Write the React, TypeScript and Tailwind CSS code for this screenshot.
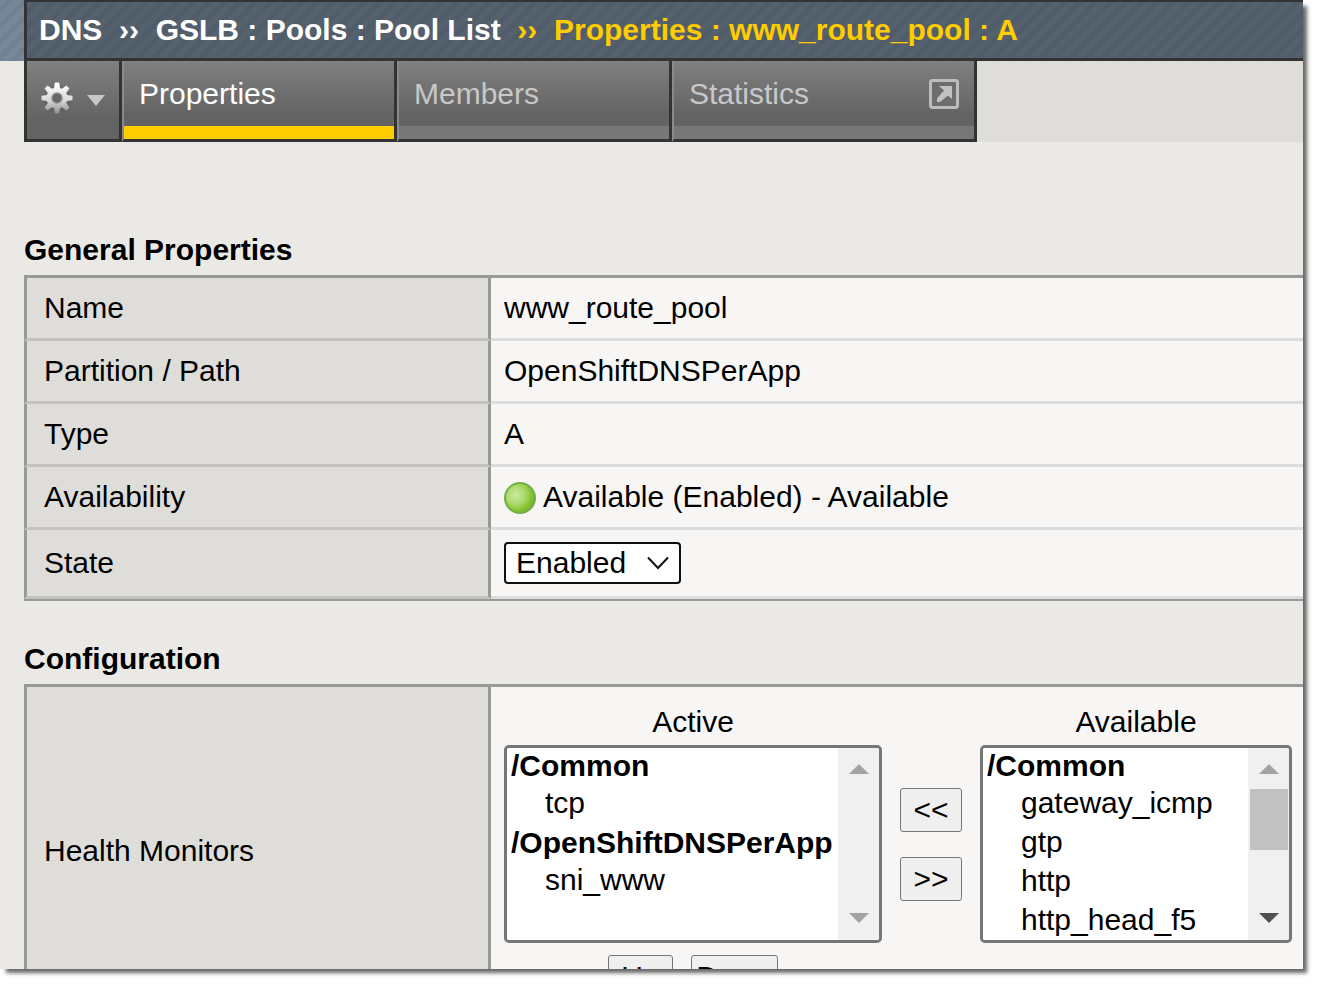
import React from "react";

type Group = { label: string; items: string[] };

const activeMonitors: Group[] = [
  { label: "/Common", items: ["tcp"] },
  { label: "/OpenShiftDNSPerApp", items: ["sni_www"] },
];

const availableMonitors: Group[] = [
  { label: "/Common", items: ["gateway_icmp", "gtp", "http", "http_head_f5"] },
];

const gearTeeth = [0, 45, 90, 135, 180, 225, 270, 315];

function GearIcon() {
  return (
    <svg width="34" height="34" viewBox="0 0 34 34" aria-hidden="true">
      <defs>
        <linearGradient id="gear" gradientUnits="userSpaceOnUse" x1="0" y1="2" x2="0" y2="33">
          <stop offset="0" stopColor="#ffffff" />
          <stop offset="0.55" stopColor="#dadada" />
          <stop offset="1" stopColor="#8c8c8c" />
        </linearGradient>
        <mask id="gear-shape">
          <g fill="#fff">
            <circle cx="17" cy="17" r="10.500" />
            {gearTeeth.map((angle) => (
              <path key={angle} d="M13.800 9L14.800 1.500H19.200L20.200 9z" transform={`rotate(${angle} 17 17)`} />
            ))}
          </g>
          <circle cx="17" cy="17" r="4.800" fill="#000" />
        </mask>
      </defs>
      <circle cx="17" cy="18" r="14" fill="#555" opacity="0.3" />
      <rect width="34" height="34" fill="url(#gear)" mask="url(#gear-shape)" />
      <circle cx="17" cy="17" r="5" fill="none" stroke="#8a8a8a" strokeWidth="1.500" />
    </svg>
  );
}

function PopOutIcon() {
  return (
    <svg width="30" height="30" viewBox="0 0 30 30" aria-hidden="true">
      <rect x="1.500" y="1.500" width="27" height="27" rx="2" fill="#6d6d6d" stroke="#bcbcbc" strokeWidth="3" />
      <path d="M10 7h13v13l-4-3.500-8 6.500H8v-3.500l7-8z" fill="#c2c2c2" />
    </svg>
  );
}

function StatusIcon() {
  return (
    <svg width="32" height="32" viewBox="0 0 32 32" aria-hidden="true">
      <defs>
        <radialGradient id="status" cx="0.36" cy="0.4" r="0.62">
          <stop offset="0" stopColor="#cdeaa2" />
          <stop offset="0.5" stopColor="#abd96a" />
          <stop offset="0.85" stopColor="#84c22c" />
          <stop offset="1" stopColor="#78b532" />
        </radialGradient>
      </defs>
      <circle cx="16" cy="16" r="15" fill="url(#status)" stroke="#74ae48" strokeWidth="2" />
    </svg>
  );
}

function Tab({ label, active, wide }: { label: string; active?: boolean; wide?: boolean }) {
  return (
    <a
      href="#"
      className={`flex flex-col border-r-3 border-b-3 border-l-2 border-r-[#333] border-b-[#333] border-l-[#8a8a8a] ${
        wide ? "w-[305px]" : "w-[275px]"
      } ${active ? "text-white" : "text-[#c8c8c8]"}`}
    >
      <span className="flex h-[65px] items-center justify-between bg-linear-to-b from-[#808080] to-[#636363] to-85% pr-[15px] pl-[15px]">
        {label}
        {wide && <PopOutIcon />}
      </span>
      <span className={`h-[13px] ${active ? "bg-[#fc0]" : "bg-[#777]"}`} />
    </a>
  );
}

function Arrow({ up, dark }: { up?: boolean; dark?: boolean }) {
  return (
    <svg width="20" height="10" viewBox="0 0 20 10" aria-hidden="true">
      <path d={up ? "M0 10L10 0L20 10z" : "M0 0H20L10 10z"} fill={dark ? "#505050" : "#a3a3a3"} />
    </svg>
  );
}

function MonitorList({ id, label, groups, thumb }: { id: string; label: string; groups: Group[]; thumb?: boolean }) {
  return (
    <div className="flex flex-col items-center">
      <label htmlFor={id} className="mb-1 leading-[38px]">
        {label}
      </label>
      <div className="flex h-[198px] w-full overflow-hidden rounded-[5px] border-3 border-[#767676] bg-white">
        <select
          id={id}
          multiple
          size={5}
          className="min-w-0 grow overflow-hidden bg-white pl-0.5 outline-none [scrollbar-width:none]"
        >
          {groups.map((g) => (
            <optgroup key={g.label} label={g.label} className="pt-px font-bold">
              {g.items.map((item) => (
                <option key={item} className="pb-[5px] pl-9 font-normal">
                  {item}
                </option>
              ))}
            </optgroup>
          ))}
        </select>
        <div className="flex w-[41px] shrink-0 flex-col items-center justify-between bg-[#f0f0f0] pt-4 pb-[17px]">
          <div className="flex w-full flex-col items-center gap-[15px]">
            <Arrow up />
            {thumb && <div className="h-[61px] w-[38px] bg-[#c1c1c1]" />}
          </div>
          <Arrow dark={thumb} />
        </div>
      </div>
    </div>
  );
}

function PushButton({ children, className }: { children: React.ReactNode; className: string }) {
  return (
    <button
      type="button"
      className={`h-11 rounded-[3px] border border-[#767676] bg-[#efefef] leading-[40px] ${className}`}
    >
      {children}
    </button>
  );
}

function Row({ label, htmlFor, tall, children }: { label: string; htmlFor?: string; tall?: boolean; children: React.ReactNode }) {
  return (
    <tr className={tall ? "h-[69px]" : "h-[63px]"}>
      <th
        scope="row"
        className="w-[467px] border-r-3 border-b-3 border-l-3 border-r-[#999] border-b-[#c3c2be] border-l-[#999] bg-[#deddd9] pl-[17px] text-left font-normal"
      >
        {htmlFor ? <label htmlFor={htmlFor}>{label}</label> : label}
      </th>
      <td className="border-b-3 border-[#dcdcdc] bg-[#f7f6f5] pl-[13px]">{children}</td>
    </tr>
  );
}

const tableClass = "w-full border-separate border-spacing-0 border-t-3 border-b-2 border-[#999]";

export default function App() {
  return (
    <div className="h-screen overflow-hidden bg-white pr-[15px] pb-[15px]">
      <div className="h-full shadow-[5px_5px_4px_-1px_rgba(0,0,0,0.6)]">
        <div className="h-full overflow-hidden bg-[#eae9e5] font-['Liberation_Sans',Arial,sans-serif] text-[30px] leading-[34px] text-black">
          <header>
            <div className="flex h-[61px] bg-[repeating-linear-gradient(135deg,#778899_0px,#778899_4px,#708192_6px,#708192_9px,#778899_11px)]">
              <h1 className="ml-6 flex grow items-center border-t-2 border-b-3 border-l-3 border-[#333] bg-[repeating-linear-gradient(135deg,#55616c_0px,#55616c_4px,#505c69_6px,#505c69_9px,#55616c_11px)] pl-3 font-bold whitespace-pre text-white">
                <span>{"DNS\u00a0 ››\u00a0 GSLB : Pools : Pool List\u00a0 "}</span>
                <span className="text-[#fc0]">{"››\u00a0 Properties : www_route_pool : A"}</span>
              </h1>
            </div>
            <nav className="ml-6 flex h-[81px] bg-[#deddd9]">
              <button
                type="button"
                aria-label="Options"
                className="flex w-[98px] items-center border-r-3 border-b-3 border-l-3 border-[#333] bg-linear-to-b from-[#808080] to-[#636363] to-75% pb-1 pl-[13px]"
              >
                <GearIcon />
                <svg width="18" height="11" viewBox="0 0 18 11" className="mt-1 ml-[13px]" aria-hidden="true">
                  <path d="M0 0H18L9 11z" fill="#c8c8c8" />
                </svg>
              </button>
              <Tab label="Properties" active />
              <Tab label="Members" />
              <Tab label="Statistics" wide />
            </nav>
          </header>

          <main className="pl-6">
            <h2 className="mt-[91px] mb-2 font-bold">General Properties</h2>
            <table className={tableClass}>
              <tbody>
                <Row label="Name">www_route_pool</Row>
                <Row label="Partition / Path">OpenShiftDNSPerApp</Row>
                <Row label="Type">A</Row>
                <Row label="Availability">
                  <span className="flex items-end gap-[7px]">
                    <StatusIcon />
                    Available (Enabled) - Available
                  </span>
                </Row>
                <Row label="State" htmlFor="state" tall>
                  <span className="flex">
                    <span className="relative">
                      <select
                        id="state"
                        className="h-[42px] w-[177px] appearance-none rounded-[4px] border-2 border-[#101010] bg-white pl-2.5"
                      >
                        <option>Enabled</option>
                        <option>Disabled</option>
                      </select>
                      <svg
                        width="22"
                        height="14"
                        viewBox="0 0 22 14"
                        className="pointer-events-none absolute top-3.5 right-3"
                        aria-hidden="true"
                      >
                        <path d="M1 1.500L11 12L21 1.500" fill="none" stroke="#101010" strokeWidth="2" />
                      </svg>
                    </span>
                  </span>
                </Row>
              </tbody>
            </table>

            <h2 className="mt-[41px] mb-2 font-bold">Configuration</h2>
            <table className={tableClass}>
              <tbody>
                <Row label="Health Monitors">
                  <div className="flex items-start gap-[18px] py-4">
                    <div className="w-[378px]">
                      <MonitorList id="active" label="Active" groups={activeMonitors} />
                      <div className="mt-3 flex justify-center gap-[18px]">
                        <PushButton className="w-[65px]">Up</PushButton>
                        <PushButton className="w-[87px]">Down</PushButton>
                      </div>
                    </div>
                    <div className="flex w-[62px] flex-col gap-[25px] pt-[85px]">
                      <PushButton className="w-full">&lt;&lt;</PushButton>
                      <PushButton className="w-full">&gt;&gt;</PushButton>
                    </div>
                    <div className="w-[312px]">
                      <MonitorList id="available" label="Available" groups={availableMonitors} thumb />
                    </div>
                  </div>
                </Row>
              </tbody>
            </table>
          </main>
        </div>
      </div>
    </div>
  );
}
